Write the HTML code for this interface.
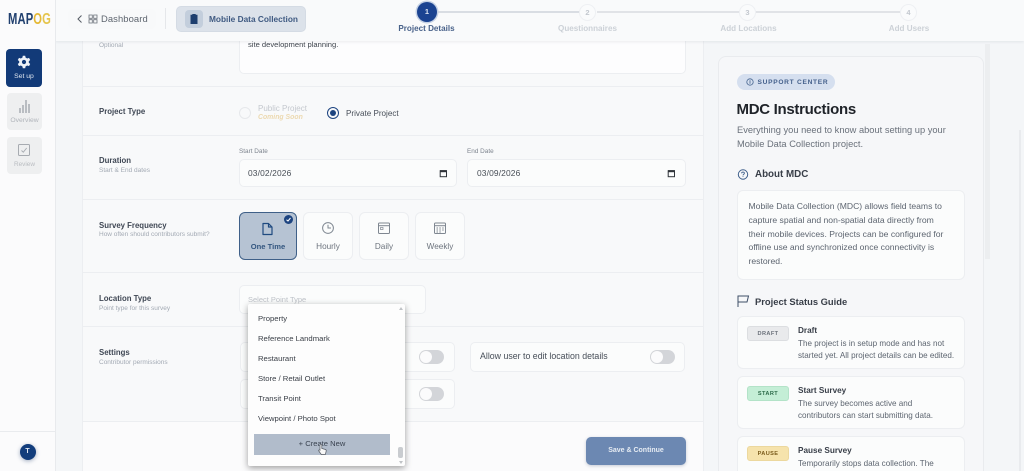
<!DOCTYPE html>
<html><head><meta charset="utf-8">
<style>
html,body{margin:0;padding:0;width:1024px;height:471px;overflow:hidden}
body{position:relative;background:#f4f6f8;font-family:"Liberation Sans",sans-serif;color:#374151}
#w{position:absolute;left:0;top:0;width:1024px;height:471px;overflow:hidden;background:#f4f6f8;filter:blur(.3px)}
.a{position:absolute;box-sizing:border-box}
.t{position:absolute;white-space:nowrap;line-height:1}
.lbl{font-size:7.8px;font-weight:bold;color:#3f4754}
.sub{font-size:6.5px;color:#a3aab4}
.box{position:absolute;box-sizing:border-box;background:#fbfcfc;border:1px solid #eceef1;border-radius:5px}
.hr{position:absolute;left:83px;width:620px;height:1px;background:#eceef1}
.tog{position:absolute;width:25px;height:14px;border-radius:7px;background:#d3d5d9}
.tog:after{content:"";position:absolute;left:1px;top:1px;width:12px;height:12px;border-radius:50%;background:#fbfbfc}
.dd{position:absolute;left:258px;font-size:7.7px;color:#3a3f47;white-space:nowrap;line-height:1}
.stp{position:absolute;top:4px;width:17px;height:17px;border-radius:50%;background:#fafbfc;border:1px solid #eef0f3;box-sizing:border-box;color:#c3c8cf;font-size:7.5px;font-weight:bold;text-align:center;line-height:15px}
.sl{position:absolute;top:25px;font-size:8.1px;font-weight:bold;color:#ccd1d7;white-space:nowrap;line-height:1;transform:translateX(-50%)}
.p{position:absolute;font-size:8.6px;color:#5d6570;line-height:13.8px;white-space:nowrap}
.ttl{position:absolute;font-size:8.2px;font-weight:bold;color:#3a404a;white-space:nowrap;line-height:1}
.bdg{position:absolute;left:747px;width:42px;height:15px;border-radius:3px;font-size:5.6px;font-weight:bold;text-align:center;line-height:14px;letter-spacing:.4px;box-sizing:border-box}
.g{font-size:8.1px;line-height:11.7px}
</style></head><body><div id="w">

<!-- form column -->
<div class="a" style="left:82px;top:41px;width:622px;height:430px;background:#f8f9fa;border-left:1px solid #eceef1;border-right:1px solid #eceef1"></div>
<div class="a" style="left:83px;top:421px;width:620px;height:50px;background:#fbfbfc"></div>
<div class="hr" style="top:86px"></div>
<div class="hr" style="top:135px"></div>
<div class="hr" style="top:199px"></div>
<div class="hr" style="top:272px"></div>
<div class="hr" style="top:326px"></div>
<div class="hr" style="top:421px"></div>

<div class="t sub" style="left:99px;top:42.5px">Optional</div>
<div class="box" style="left:239px;top:30px;width:447px;height:44px;background:#fdfdfe"></div>
<div class="t" style="left:248px;top:41px;font-size:7.6px;color:#40464f">site development planning.</div>

<div class="t lbl" style="left:99px;top:108px">Project Type</div>
<div class="a" style="left:239px;top:107px;width:12px;height:12px;border-radius:50%;border:1px solid #e6e8eb;background:#f8f9fa"></div>
<div class="t" style="left:258px;top:105px;font-size:8px;color:#c4c8ce">Public Project</div>
<div class="t" style="left:258px;top:115px;font-size:6.9px;color:#ecd9b0;font-weight:bold;font-style:italic">Coming Soon</div>
<div class="a" style="left:327px;top:107px;width:12px;height:12px;border-radius:50%;border:1.5px solid #1d4480;background:#f8f9fa"></div>
<div class="a" style="left:330px;top:110px;width:6px;height:6px;border-radius:50%;background:#1d4480"></div>
<div class="t" style="left:346px;top:110px;font-size:8.1px;color:#474e58">Private Project</div>

<div class="t lbl" style="left:99px;top:157px">Duration</div>
<div class="t sub" style="left:99px;top:168px">Start &amp; End dates</div>
<div class="t" style="left:239px;top:148.5px;font-size:6.4px;color:#7d848e">Start Date</div>
<div class="t" style="left:467px;top:148.5px;font-size:6.4px;color:#7d848e">End Date</div>
<div class="box" style="left:239px;top:159px;width:218px;height:28px"></div>
<div class="box" style="left:467px;top:159px;width:219px;height:28px"></div>
<div class="t" style="left:248px;top:169px;font-size:8.4px;color:#474d56;letter-spacing:.15px">03/02/2026</div>
<div class="t" style="left:477px;top:169px;font-size:8.4px;color:#474d56;letter-spacing:.15px">03/09/2026</div>
<svg class="a" style="left:439px;top:169px" width="9" height="9" viewBox="0 0 9 9"><rect x="1.2" y="1.7" width="6.3" height="6" fill="none" stroke="#30343a" stroke-width="1"/><rect x="1" y="1.2" width="6.7" height="2" fill="#30343a"/></svg>
<svg class="a" style="left:667px;top:169px" width="9" height="9" viewBox="0 0 9 9"><rect x="1.2" y="1.7" width="6.3" height="6" fill="none" stroke="#30343a" stroke-width="1"/><rect x="1" y="1.2" width="6.7" height="2" fill="#30343a"/></svg>

<div class="t lbl" style="left:99px;top:221.5px">Survey Frequency</div>
<div class="t sub" style="left:99px;top:231.5px">How often should contributors submit?</div>

<div class="a" style="left:239px;top:212px;width:58px;height:48px;border-radius:6px;background:#b6c3d3;border:1px solid #3f6088"></div>
<div class="a" style="left:284px;top:215px;width:9px;height:9px;border-radius:50%;background:#1d4480"></div>
<svg class="a" style="left:285px;top:216px" width="7" height="7" viewBox="0 0 7 7"><path d="M1.5 3.7L3 5L5.5 2" fill="none" stroke="#fff" stroke-width="1"/></svg>
<svg class="a" style="left:261px;top:222px" width="13" height="14" viewBox="0 0 13 14"><path d="M2 1.5H7.5L11 5V12.5H2ZM7.5 1.5V5H11" fill="none" stroke="#1f4a80" stroke-width="1.2" stroke-linejoin="round"/></svg>
<div class="t" style="left:239px;top:243px;width:58px;text-align:center;font-size:7.6px;font-weight:bold;color:#33567f">One Time</div>

<div class="box" style="left:303px;top:212px;width:50px;height:48px;border-radius:6px"></div>
<svg class="a" style="left:321px;top:221px" width="14" height="14" viewBox="0 0 14 14"><circle cx="7" cy="7" r="5.4" fill="none" stroke="#7f8791" stroke-width="1"/><path d="M7 3.8V7H10" fill="none" stroke="#7f8791" stroke-width="1"/></svg>
<div class="t" style="left:303px;top:243px;width:50px;text-align:center;font-size:8.2px;color:#6d747e">Hourly</div>

<div class="box" style="left:359px;top:212px;width:50px;height:48px;border-radius:6px"></div>
<svg class="a" style="left:377px;top:221px" width="14" height="14" viewBox="0 0 14 14"><rect x="1.5" y="2" width="11" height="10.5" rx="1" fill="none" stroke="#7f8791"/><path d="M1.5 4.7H12.5" stroke="#7f8791"/><rect x="3.5" y="6.5" width="2.5" height="2" fill="none" stroke="#7f8791" stroke-width=".7"/></svg>
<div class="t" style="left:359px;top:243px;width:50px;text-align:center;font-size:8.2px;color:#6d747e">Daily</div>

<div class="box" style="left:415px;top:212px;width:50px;height:48px;border-radius:6px"></div>
<svg class="a" style="left:433px;top:221px" width="14" height="14" viewBox="0 0 14 14"><rect x="1.5" y="2" width="11" height="10.5" rx="1" fill="none" stroke="#7f8791"/><path d="M1.5 4.7H12.5" stroke="#7f8791"/><path d="M3.5 7H5M6.3 7H7.8M9.2 7H10.7M3.5 9H5M6.3 9H7.8M9.2 9H10.7M3.5 11H5M6.3 11H7.8" stroke="#7f8791" stroke-width=".9"/></svg>
<div class="t" style="left:415px;top:243px;width:50px;text-align:center;font-size:8.2px;color:#6d747e">Weekly</div>

<div class="t lbl" style="left:99px;top:295px">Location Type</div>
<div class="t sub" style="left:99px;top:306px">Point type for this survey</div>
<div class="box" style="left:239px;top:285px;width:187px;height:29px"></div>
<div class="t" style="left:248px;top:295.5px;font-size:7.5px;color:#bfc3c9">Select Point Type</div>

<div class="t lbl" style="left:99px;top:349px">Settings</div>
<div class="t sub" style="left:99px;top:359.5px">Contributor permissions</div>

<div class="box" style="left:240px;top:342px;width:215px;height:30px"></div>
<div class="box" style="left:240px;top:379px;width:215px;height:30px"></div>
<div class="box" style="left:470px;top:342px;width:215px;height:30px"></div>
<div class="tog" style="left:419px;top:350px"></div>
<div class="tog" style="left:419px;top:387px"></div>
<div class="tog" style="left:650px;top:350px"></div>
<div class="t" style="left:480px;top:352px;font-size:8.8px;color:#474e58">Allow user to edit location details</div>

<div class="a" style="left:586px;top:437px;width:100px;height:28px;border-radius:5px;background:#6c88b2;box-shadow:0 1px 3px rgba(40,60,100,.25);color:#e6ecf3;font-size:7px;font-weight:bold;text-align:center;line-height:28px">Save &amp; Continue</div>

<!-- dropdown -->
<div class="a" style="left:248px;top:304px;width:157px;height:162px;background:#fdfdfd;box-shadow:0 2px 7px rgba(0,0,0,.38);border-radius:2px"></div>
<div class="dd" style="top:315px">Property</div>
<div class="dd" style="top:335px">Reference Landmark</div>
<div class="dd" style="top:355px">Restaurant</div>
<div class="dd" style="top:375px">Store / Retail Outlet</div>
<div class="dd" style="top:395px">Transit Point</div>
<div class="dd" style="top:415px">Viewpoint / Photo Spot</div>
<div class="a" style="left:254px;top:434px;width:136px;height:21px;background:#b1bccb"></div>
<div class="t" style="left:254px;top:440px;width:136px;text-align:center;font-size:7.6px;color:#3a4350">+ Create New</div>
<svg class="a" style="left:317px;top:443px" width="11" height="13" viewBox="0 0 11 13"><path d="M3.2 1.5C4 1 4.8 1.5 4.8 2.3V5.5L8.5 6.5C9.3 6.8 9.3 7.8 9.1 8.5L8.3 11.5H4.3L1.8 8C1.3 7.2 2.2 6.5 3 7.2V2.3Z" fill="#f8f8f8" stroke="#555b63" stroke-width=".7"/></svg>
<div class="a" style="left:398px;top:447px;width:5px;height:11px;background:#c9ccd0;border-radius:2px"></div>
<div class="a" style="left:399px;top:307px;width:0;height:0;border:2.5px solid transparent;border-bottom:3px solid #bfc2c6;border-top:0"></div>
<div class="a" style="left:399px;top:461px;width:0;height:0;border:2.5px solid transparent;border-top:3px solid #bfc2c6;border-bottom:0"></div>

<!-- right panel -->
<div class="a" style="left:718px;top:56px;width:266px;height:415px;background:#f6f7f9;border:1px solid #e9ebee;border-bottom:0;border-radius:8px 8px 0 0"></div>
<div class="a" style="left:985px;top:44px;width:5px;height:215px;background:#eceef0"></div>
<div class="a" style="left:1019px;top:130px;width:2px;height:341px;background:#e9ebee"></div>
<div class="a" style="left:737px;top:74px;width:98px;height:16px;border-radius:8px;background:#d5dfef"></div>
<svg class="a" style="left:745px;top:77px" width="10" height="10" viewBox="0 0 10 10"><circle cx="5" cy="5" r="3.2" fill="none" stroke="#45648f" stroke-width=".8"/><path d="M5 3.2V6.8" stroke="#45648f" stroke-width=".8"/></svg>
<div class="t" style="left:757.5px;top:79.5px;font-size:6.6px;font-weight:bold;letter-spacing:.72px;color:#45618c">SUPPORT CENTER</div>
<div class="t" style="left:736.5px;top:101.5px;font-size:15px;font-weight:bold;color:#1f2329;letter-spacing:-.3px">MDC Instructions</div>
<div class="p" style="left:737px;top:123px;font-size:9.3px;line-height:14px;color:#6a717b">Everything you need to know about setting up your<br>Mobile Data Collection project.</div>

<svg class="a" style="left:737px;top:168px" width="13" height="13" viewBox="0 0 13 13"><circle cx="6" cy="6.5" r="4.7" fill="none" stroke="#3f5f8b"/><path d="M4.6 5.3C4.7 3.6 7.5 3.7 7.4 5.3C7.4 6.3 6 6.3 6 7.4M6 8.3V9" fill="none" stroke="#3f5f8b" stroke-width=".9"/></svg>
<div class="t" style="left:755px;top:170px;font-size:9.8px;font-weight:bold;color:#383e48">About MDC</div>

<div class="a" style="left:737px;top:190px;width:228px;height:90px;background:#fbfcfc;border:1px solid #eceef1;border-radius:6px"></div>
<div class="p" style="left:748.5px;top:200px">Mobile Data Collection (MDC) allows field teams to<br>capture spatial and non-spatial data directly from<br>their mobile devices. Projects can be configured for<br>offline use and synchronized once connectivity is<br>restored.</div>

<svg class="a" style="left:736px;top:294px" width="14" height="14" viewBox="0 0 14 14"><path d="M2 13V2H12.5L11 8H2" fill="none" stroke="#3f4f68" stroke-width="1"/></svg>
<div class="t" style="left:755px;top:296.5px;font-size:9.4px;font-weight:bold;color:#383e48">Project Status Guide</div>

<div class="a" style="left:737px;top:316px;width:228px;height:53px;background:#fbfcfc;border:1px solid #eceef1;border-radius:6px"></div>
<div class="bdg" style="top:326px;background:#e9eaec;border:1px solid #dcdee1;color:#6b717a">DRAFT</div>
<div class="ttl" style="left:798px;top:326.5px">Draft</div>
<div class="p g" style="left:798px;top:338px">The project is in setup mode and has not<br>started yet. All project details can be edited.</div>

<div class="a" style="left:737px;top:376px;width:228px;height:53px;background:#fbfcfc;border:1px solid #eceef1;border-radius:6px"></div>
<div class="bdg" style="top:386px;background:#c4eed6;border:1px solid #b3e3c8;color:#2c6a49">START</div>
<div class="ttl" style="left:798px;top:386.5px">Start Survey</div>
<div class="p g" style="left:798px;top:398px">The survey becomes active and<br>contributors can start submitting data.</div>

<div class="a" style="left:737px;top:436px;width:228px;height:35px;background:#fbfcfc;border:1px solid #eceef1;border-bottom:0;border-radius:6px 6px 0 0"></div>
<div class="bdg" style="top:446px;background:#f6e3ac;border:1px solid #ecd89e;color:#7b5c1c">PAUSE</div>
<div class="ttl" style="left:798px;top:446.5px">Pause Survey</div>
<div class="p g" style="left:798px;top:458px;height:13px;overflow:hidden">Temporarily stops data collection. The</div>

<!-- header -->
<div class="a" style="left:55px;top:0;width:969px;height:41px;background:#f9fafb;box-shadow:0 1px 3px rgba(60,70,90,.09)"></div>
<div class="a" style="left:68px;top:9px;width:88px;height:20px;background:#f8f9fa;border-radius:5px"></div>
<svg class="a" style="left:75px;top:14px" width="10" height="10" viewBox="0 0 10 10"><path d="M6.5 1.5L3 5L6.5 8.5" fill="none" stroke="#565c65" stroke-width="1"/></svg>
<svg class="a" style="left:88px;top:14px" width="10" height="10" viewBox="0 0 10 10"><path d="M1 1H4.3V4.3H1ZM5.7 1H9V4.3H5.7ZM1 5.7H4.3V9H1ZM5.7 5.7H9V9H5.7Z" fill="none" stroke="#6a7079" stroke-width=".8"/></svg>
<div class="t" style="left:101px;top:14px;font-size:9.4px;color:#5e656f;letter-spacing:.1px">Dashboard</div>
<div class="a" style="left:165px;top:8px;width:1px;height:21px;background:#e5e7ea"></div>
<div class="a" style="left:176px;top:6px;width:130px;height:26px;background:#dce2ea;border:1px solid #d4dbe4;border-radius:5px"></div>
<div class="a" style="left:185px;top:10px;width:18px;height:18px;background:#c3cedc;border-radius:4px"></div>
<svg class="a" style="left:189px;top:13px" width="10" height="12" viewBox="0 0 10 12"><path d="M1.5 1.7H3.3V1H6.7V1.7H8.5V11H1.5Z" fill="#1d3e6e"/></svg>
<div class="t" style="left:209px;top:14.5px;font-size:8.3px;font-weight:bold;color:#3f5a82">Mobile Data Collection</div>

<!-- stepper -->
<div class="a" style="left:436px;top:11px;width:153px;height:1.5px;background:#d9dde3"></div>
<div class="a" style="left:597px;top:11px;width:143px;height:1.5px;background:#e1e3e7"></div>
<div class="a" style="left:756px;top:11px;width:144px;height:1.5px;background:#e1e3e7"></div>
<div class="a" style="left:417px;top:2px;width:20px;height:20px;border-radius:50%;background:#1b4391;box-shadow:0 0 0 1.5px #c6d2e5;color:#dfe6f2;font-size:7.5px;font-weight:bold;text-align:center;line-height:20px">1</div>
<div class="stp" style="left:579px">2</div>
<div class="stp" style="left:739px">3</div>
<div class="stp" style="left:900px">4</div>
<div class="sl" style="left:426.5px;color:#49628a">Project Details</div>
<div class="sl" style="left:587.5px">Questionnaires</div>
<div class="sl" style="left:748.5px">Add Locations</div>
<div class="sl" style="left:909px">Add Users</div>

<!-- sidebar -->
<div class="a" style="left:0;top:0;width:56px;height:471px;background:#fbfbfc;border-right:1px solid #e8eaed"></div>
<div class="a" style="left:0;top:431px;width:55px;height:1px;background:#e9ebee"></div>
<div class="t" style="left:8px;top:11.5px;font-size:16px;font-weight:bold;color:#21406f;transform:scaleX(.7);transform-origin:left;letter-spacing:.2px">MAP<span style="color:#e5b937">O</span><span style="color:#e5c54e">G</span></div>
<div class="a" style="left:6px;top:49px;width:36px;height:38px;border-radius:4px;background:#123a78"></div>
<svg class="a" style="left:17px;top:55px" width="14" height="14" viewBox="0 0 14 14"><path d="M5.8 .8H8.2L8.6 2.6L10.2 3.5L12 2.9L13.2 5L11.8 6.2V7.8L13.2 9L12 11.1L10.2 10.5L8.6 11.4L8.2 13.2H5.8L5.4 11.4L3.8 10.5L2 11.1L.8 9L2.2 7.8V6.2L.8 5L2 2.9L3.8 3.5L5.4 2.6Z" fill="#eef2f8"/><circle cx="7" cy="7" r="2.1" fill="#123a78"/></svg>
<div class="t" style="left:6px;top:73.5px;width:36px;text-align:center;font-size:6.8px;color:#dfe6f0">Set up</div>
<div class="a" style="left:7px;top:93px;width:35px;height:37px;border-radius:4px;background:#eeeff0"></div>
<svg class="a" style="left:17px;top:99px" width="15" height="15" viewBox="0 0 15 15"><path d="M2 9H4V14H2ZM5 6H7V14H5ZM8 1H10V14H8ZM11 5H13V14H11Z" fill="#b9bdc2"/></svg>
<div class="t" style="left:6px;top:117.5px;width:37px;text-align:center;font-size:6.8px;color:#b1b5bb">Overview</div>
<div class="a" style="left:7px;top:137px;width:35px;height:37px;border-radius:4px;background:#eeeff0"></div>
<svg class="a" style="left:17px;top:143px" width="14" height="14" viewBox="0 0 14 14"><rect x="1.5" y="1.5" width="11" height="11" rx="1" fill="none" stroke="#a7abb1"/><path d="M4.5 7.5L6.3 9.2L9.7 5" fill="none" stroke="#a7abb1" stroke-width=".9"/></svg>
<div class="t" style="left:6px;top:161.5px;width:37px;text-align:center;font-size:6.4px;color:#b9bcc1">Review</div>
<div class="a" style="left:19.5px;top:444px;width:16px;height:16px;border-radius:50%;background:#123d7c;box-shadow:0 1px 4px rgba(20,50,100,.4);color:#dfe6f0;font-size:7px;font-weight:bold;text-align:center;line-height:16px">T</div>

</div></body></html>
